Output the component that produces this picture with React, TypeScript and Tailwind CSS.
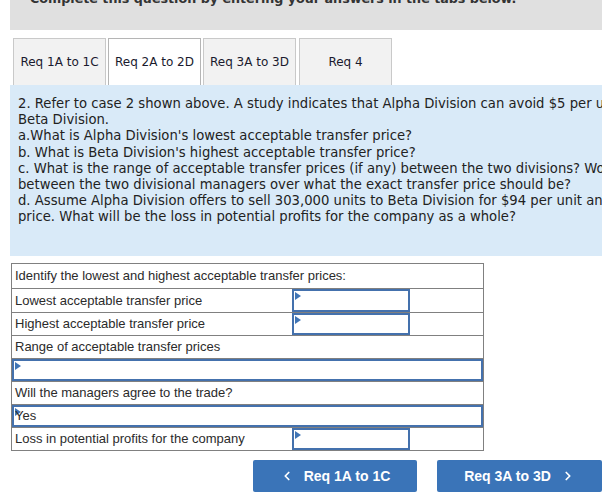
import React from "react";
import { ChevronLeft, ChevronRight } from "lucide-react";

const tabs = ["Req 1A to 1C", "Req 2A to 2D", "Req 3A to 3D", "Req 4"];

const lines = [
  "2. Refer to case 2 shown above. A study indicates that Alpha Division can avoid $5 per unit in variable costs on any sales to",
  "Beta Division.",
  "a.What is Alpha Division's lowest acceptable transfer price?",
  "b. What is Beta Division's highest acceptable transfer price?",
  "c. What is the range of acceptable transfer prices (if any) between the two divisions? Would you expect any disagreement",
  "between the two divisional managers over what the exact transfer price should be?",
  "d. Assume Alpha Division offers to sell 303,000 units to Beta Division for $94 per unit and that Beta Division refuses this",
  "price. What will be the loss in potential profits for the company as a whole?",
];

function Flag() {
  return (
    <span className="absolute left-[1px] top-[1px] h-0 w-0 border-y-[4px] border-l-[6px] border-y-transparent border-l-[#3f74b5]" />
  );
}

function InputBox({ wide, value }: { wide?: boolean; value?: string }) {
  return (
    <div
      className={`relative h-full border-2 border-[#4471ad] bg-white ${wide ? "w-full" : "w-[118px]"}`}
    >
      <Flag />
      {value && <span className="absolute left-[1px] top-0 leading-[18px]">{value}</span>}
    </div>
  );
}

function LabelRow({ children, first }: { children: React.ReactNode; first?: boolean }) {
  return (
    <div
      className={`flex items-center px-[3px] ${
        first ? "h-[24px]" : "h-[23px] border-t border-[#808080]"
      }`}
    >
      {children}
    </div>
  );
}

function InputRow({ label, h = "h-[23px]" }: { label: string; h?: string }) {
  return (
    <div className={`flex border-t border-[#808080] ${h}`}>
      <div className="flex w-[280px] items-center px-[3px]">{label}</div>
      <InputBox />
      <div className="flex-1" />
    </div>
  );
}

export default function App() {
  return (
    <div className="relative h-[495px] w-[602px] overflow-hidden bg-white">
      <div className="ml-[10px] flex h-[30px] items-start overflow-hidden bg-[#e0e0e0]">
        <p className="-mt-[9px] whitespace-nowrap pl-[20px] font-['DejaVu_Sans',sans-serif] text-[12.7px] font-bold leading-[15px] text-[#333]">
          Complete this question by entering your answers in the tabs below.
        </p>
      </div>

      <div className="mt-[8px] flex gap-[2px] pl-[13px] font-['DejaVu_Sans',sans-serif] text-[12px] text-[#1a1a2e]">
        {tabs.map((t, i) => (
          <div
            key={t}
            className={`flex h-[47px] w-[93px] items-center justify-center border border-b-0 ${
              i === 1 ? "border-[#b5b5b5] bg-white" : "border-[#c9c9c9] bg-[#f2f2f2]"
            } ${i === 3 ? "ml-[1px]" : ""}`}
          >
            {t}
          </div>
        ))}
      </div>

      <div className="ml-[10px] h-[171px] overflow-hidden bg-[#d9eaf8] pl-[8px] pt-[11px] font-['DejaVu_Sans',sans-serif] text-[13.2px] leading-[16.2px] text-[#222]">
        {lines.map((l) => (
          <div key={l} className="whitespace-nowrap">
            {l}
          </div>
        ))}
      </div>

      <div className="ml-[11px] mt-[7px] w-[473px] border border-[#808080] font-['Liberation_Sans',Arial,sans-serif] text-[13px] text-[#2b2b2b]">
        <LabelRow first>Identify the lowest and highest acceptable transfer prices:</LabelRow>
        <InputRow label="Lowest acceptable transfer price" h="h-[24px]" />
        <InputRow label="Highest acceptable transfer price" />
        <LabelRow>Range of acceptable transfer prices</LabelRow>
        <div className="h-[23px] border-t border-[#808080]">
          <InputBox wide />
        </div>
        <LabelRow>Will the managers agree to the trade?</LabelRow>
        <div className="h-[23px] border-t border-[#808080]">
          <InputBox wide value="Yes" />
        </div>
        <InputRow label="Loss in potential profits for the company" />
      </div>

      <div className="mt-[9px] flex gap-[20px] pl-[253px] font-['Liberation_Sans',Arial,sans-serif] text-[14px] font-bold text-white">
        <button className="flex h-[32px] w-[165px] items-center justify-center gap-[10px] rounded-[2px] bg-[#3a74b8]">
          <ChevronLeft size={14} strokeWidth={3} />
          Req 1A to 1C
        </button>
        <button className="flex h-[32px] w-[165px] shrink-0 items-center justify-center gap-[10px] rounded-[2px] bg-[#3a74b8]">
          Req 3A to 3D
          <ChevronRight size={14} strokeWidth={3} />
        </button>
      </div>
    </div>
  );
}
